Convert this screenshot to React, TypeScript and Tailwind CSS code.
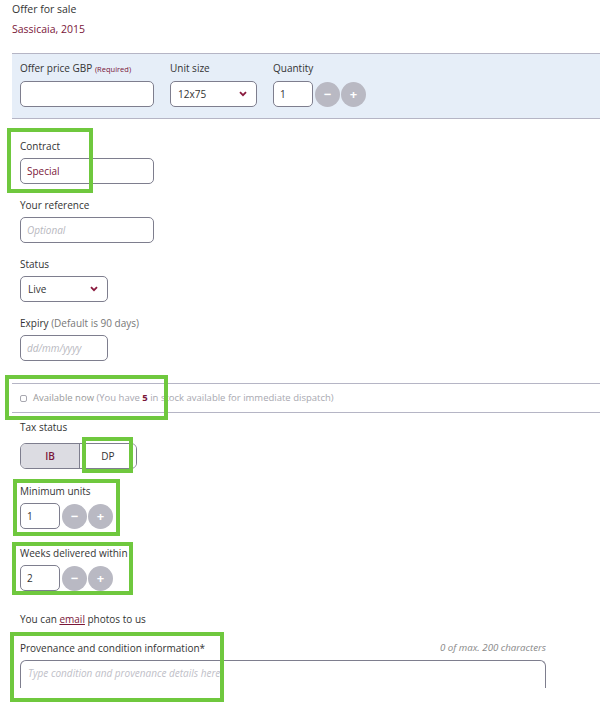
import React from "react";

const red = "text-[#7a1638]";

function Chevron() {
  return (
    <svg width="8" height="6" viewBox="0 0 8 6" className="text-[#8a1a3e]">
      <path d="M1 1.2 L4 4.2 L7 1.2" fill="none" stroke="currentColor" strokeWidth="1.8" />
    </svg>
  );
}

function Circle({ children }: { children: React.ReactNode }) {
  return (
    <div className="w-[25px] h-[25px] rounded-full bg-[#b9b9c3] flex items-center justify-center text-white font-bold text-[13px] leading-none">
      {children}
    </div>
  );
}

function Stepper({ value }: { value: string }) {
  return (
    <div className="flex items-center h-[26px]">
      <div className="w-[40px] h-[26px] border border-[#7e7e8e] rounded-[5px] bg-white flex items-center pl-[6px] text-[10px] text-[#333]">
        {value}
      </div>
      <div className="ml-[2px] flex gap-[1px]">
        <Circle>−</Circle>
        <Circle>+</Circle>
      </div>
    </div>
  );
}

function Label({ children }: { children: React.ReactNode }) {
  return <div className="h-[14px] leading-[14px] text-[10px] text-[#333]">{children}</div>;
}

function Box({ className }: { className: string }) {
  return <div className={"absolute border-[4px] border-[#6fc83e] pointer-events-none " + className} />;
}

export default function App() {
  return (
    <div
      className="relative w-[600px] h-[707px] overflow-hidden bg-white"
      style={{ fontFamily: '"Open Sans", "Noto Sans", sans-serif' }}
    >
      <div className="pl-[12px] pt-[1px] text-[10.5px] leading-[16px] text-[#333]">Offer for sale</div>
      <div className={"pl-[12px] mt-[4px] text-[10.5px] leading-[16px] " + red}>Sassicaia, 2015</div>

      {/* band */}
      <div className="ml-[12px] mt-[16px] bg-[#e6eef8] border-y border-[#b5b5c5] pl-[8px] pt-[7px] pb-[11px] flex gap-[16px]">
        <div>
          <Label>
            Offer price GBP <span className={"text-[7.5px] " + red}>(Required)</span>
          </Label>
          <div className="mt-[6px] w-[134px] h-[26px] border border-[#7e7e8e] rounded-[5px] bg-white" />
        </div>
        <div>
          <Label>Unit size</Label>
          <div className="mt-[6px] w-[87px] h-[26px] border border-[#7e7e8e] rounded-[5px] bg-white flex items-center justify-between pl-[7px] pr-[9px] text-[10px] text-[#333]">
            <span>12x75</span>
            <Chevron />
          </div>
        </div>
        <div>
          <Label>Quantity</Label>
          <div className="mt-[6px]">
            <Stepper value="1" />
          </div>
        </div>
      </div>

      <div className="pl-[20px]">
        <div className="mt-[20px]">
          <Label>Contract</Label>
          <div className={"mt-[5px] w-[134px] h-[26px] border border-[#7e7e8e] rounded-[5px] bg-white flex items-center pl-[6px] text-[10px] " + red}>
            Special
          </div>
        </div>
        <div className="mt-[14px]">
          <Label>Your reference</Label>
          <div className="mt-[5px] w-[134px] h-[26px] border border-[#7e7e8e] rounded-[5px] bg-white flex items-center pl-[6px] text-[10px] italic text-[#b8b8c0]">
            Optional
          </div>
        </div>
        <div className="mt-[14px]">
          <Label>Status</Label>
          <div className="mt-[5px] w-[88px] h-[26px] border border-[#7e7e8e] rounded-[5px] bg-white flex items-center justify-between pl-[7px] pr-[9px] text-[10px] text-[#333]">
            <span>Live</span>
            <Chevron />
          </div>
        </div>
        <div className="mt-[14px]">
          <Label>
            Expiry <span className="text-[#777]">(Default is 90 days)</span>
          </Label>
          <div className="mt-[5px] w-[88px] h-[26px] border border-[#7e7e8e] rounded-[5px] bg-white flex items-center pl-[6px] text-[10px] italic text-[#b8b8c0]">
            dd/mm/yyyy
          </div>
        </div>
      </div>

      <div className="ml-[12px] mt-[22px] border-y border-[#b5b5c5] h-[30px] flex items-center pl-[8px] text-[9.5px] text-[#a8a8b0]">
        <div className="w-[7px] h-[7px] border border-[#a8a8b0] rounded-[2px] mr-[6px]" />
        <span>
          <span className="text-[#999]">Available now</span> (You have{" "}
          <span className={"font-bold " + red}>5</span> in stock available for immediate dispatch)
        </span>
      </div>

      <div className="pl-[20px]">
        <div className="mt-[7px]">
          <Label>Tax status</Label>
          <div className="mt-[9px] flex w-[117px] h-[26px] border border-[#7e7e8e] rounded-[6px] overflow-hidden text-[10px]">
            <div className={"w-[59px] bg-[#dcdce2] border-r border-[#7e7e8e] flex items-center justify-center font-semibold " + red}>IB</div>
            <div className="flex-1 bg-white flex items-center justify-center text-[#333]">DP</div>
          </div>
        </div>
        <div className="mt-[15px]">
          <Label>Minimum units</Label>
          <div className="mt-[5px]">
            <Stepper value="1" />
          </div>
        </div>
        <div className="mt-[17px]">
          <Label>Weeks delivered within</Label>
          <div className="mt-[5px]">
            <Stepper value="2" />
          </div>
        </div>
        <div className="mt-[21px] h-[14px] leading-[14px] text-[10px] text-[#333]">
          You can <span className={"underline " + red}>email</span> photos to us
        </div>
        <div className="mt-[15px] w-[526px]">
          <div className="flex justify-between">
            <Label>Provenance and condition information*</Label>
            <div className="h-[14px] leading-[14px] text-[9.7px] italic text-[#888]">0 of max. 200 characters</div>
          </div>
          <div className="mt-[5px] h-[28px] border-t border-x border-[#7e7e8e] rounded-t-[6px] pl-[7px] pt-[5px] text-[10px] italic text-[#c0c0c8]">
            Type condition and provenance details here.
          </div>
        </div>
      </div>

      <Box className="left-[7px] top-[128px] w-[86px] h-[65px]" />
      <Box className="left-[5px] top-[375px] w-[163px] h-[45px]" />
      <Box className="left-[82px] top-[437px] w-[51px] h-[36px]" />
      <Box className="left-[13px] top-[479px] w-[107px] h-[57px]" />
      <Box className="left-[12px] top-[542px] w-[121px] h-[53px]" />
      <Box className="left-[10px] top-[632px] w-[214px] h-[70px]" />
    </div>
  );
}
